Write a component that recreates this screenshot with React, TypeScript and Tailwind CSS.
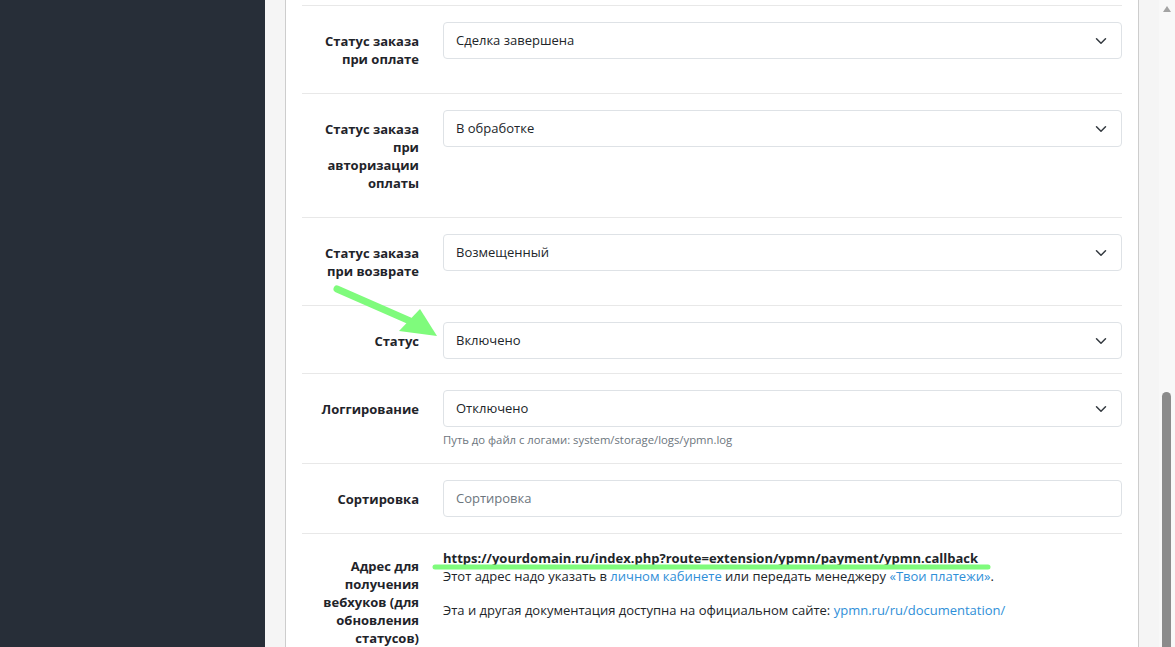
import React from "react";

type Row = {
  label: string[];
  value?: string;
  kind: "select" | "input";
  help?: string;
};

const rows: Row[] = [
  { label: ["Статус заказа", "при оплате"], value: "Сделка завершена", kind: "select" },
  { label: ["Статус заказа", "при", "авторизации", "оплаты"], value: "В обработке", kind: "select" },
  { label: ["Статус заказа", "при возврате"], value: "Возмещенный", kind: "select" },
  { label: ["Статус"], value: "Включено", kind: "select" },
  {
    label: ["Логгирование"],
    value: "Отключено",
    kind: "select",
    help: "Путь до файл с логами: system/storage/logs/ypmn.log",
  },
  { label: ["Сортировка"], kind: "input" },
];

function Chevron() {
  return (
    <svg width="16" height="12" viewBox="0 0 16 16" className="shrink-0">
      <path d="m2 5 6 6 6-6" fill="none" stroke="#343a40" strokeWidth="2" strokeLinecap="round" strokeLinejoin="round" />
    </svg>
  );
}

function Field({ row }: { row: Row }) {
  const multi = row.label.length > 1;
  return (
    <div className={`flex border-t border-[#e8e8e8] pt-4 ${row.kind === "input" ? "pb-4" : "pb-[14px]"}`}>
      {/* Label */}
      <div
        className={`w-[117px] shrink-0 pt-[10px] text-right text-[13px] leading-[18px] font-bold text-[#1f242a] ${
          multi ? "pb-[11px]" : ""
        }`}
      >
        {row.label.map((l) => (
          <div key={l}>{l}</div>
        ))}
      </div>

      {/* Control */}
      <div className="ml-6 flex-1">
        {row.kind === "select" ? (
          <div className="flex h-[37px] items-center justify-between rounded border border-[#dee2e6] bg-white pl-3 pr-3 text-[13px] text-[#212529]">
            <span>{row.value}</span>
            <Chevron />
          </div>
        ) : (
          <div className="flex h-[37px] items-center rounded border border-[#dee2e6] bg-white px-3 text-[13px] text-[#6c757d]">
            Сортировка
          </div>
        )}
        {row.help && (
          <div className="mt-1 mb-[1px] text-[11.3px] leading-[17px] text-[#6c757d]">{row.help}</div>
        )}
      </div>
    </div>
  );
}

export default function App() {
  return (
    <div className="relative flex h-[647px] w-[1175px] overflow-hidden bg-[#f5f5f5] font-['Open_Sans',sans-serif]">
      {/* Sidebar */}
      <div className="w-[265px] shrink-0 bg-[#272e38]" />

      {/* Content */}
      <div className="flex-1 px-5">
        <div className="h-full border-x border-[#cdcdcd] bg-white px-4 pt-[5px]">
          {rows.map((r) => (
            <Field key={r.label.join(" ")} row={r} />
          ))}

          {/* Webhook row */}
          <div className="flex border-t border-[#e8e8e8] pt-[13px]">
            <div className="w-[117px] shrink-0 pt-[10px] text-right text-[13px] leading-[18px] font-bold text-[#1f242a]">
              <div>Адрес для</div>
              <div>получения</div>
              <div>вебхуков (для</div>
              <div>обновления</div>
              <div>статусов)</div>
            </div>
            <div className="ml-6 flex-1 text-[13px] leading-[17px] text-[#212529]">
              <div className="pt-[1px] leading-[20px] font-bold">
                https://yourdomain.ru/index.php?route=extension/ypmn/payment/ypmn.callback
              </div>
              <div>
                Этот адрес надо указать в <span className="text-[#2f8fd8]">личном кабинете</span> или передать менеджеру{" "}
                <span className="text-[#2f8fd8]">«Твои платежи»</span>.
              </div>
              <div className="h-[17px]" />
              <div>
                Эта и другая документация доступна на официальном сайте:{" "}
                <span className="text-[#2f8fd8]">ypmn.ru/ru/documentation/</span>
              </div>
              <div className="h-[28px]" />
              <div>
                Настроить вебхуки можно в разделе <span className="text-[#2f8fd8]">https://secure.ypmn.ru/cpanel/</span>
              </div>
            </div>
          </div>
        </div>
      </div>

      {/* Scrollbar */}
      <div className="relative w-4 shrink-0 bg-[#f8f8f8]">
        <svg width="8" height="6" viewBox="0 0 8 6" className="absolute left-[4px] top-[6px]">
          <path d="M4 0 8 6 0 6z" fill="#a3a3a3" />
        </svg>
        <div className="absolute left-[3px] top-[392px] h-[280px] w-[9px] rounded-full bg-[#8b8b8b]" />
      </div>

      {/* Green annotations */}
      <svg className="pointer-events-none absolute left-0 top-0" width="1175" height="647">
        <line x1="337" y1="289" x2="410" y2="321" stroke="#7ffb7c" strokeWidth="7" strokeLinecap="round" />
        <polygon points="420,309 399,331 437,336" fill="#7ffb7c" />
        <line x1="435" y1="567" x2="988" y2="567" stroke="#7ffb7c" strokeWidth="5" strokeLinecap="round" />
      </svg>
    </div>
  );
}
